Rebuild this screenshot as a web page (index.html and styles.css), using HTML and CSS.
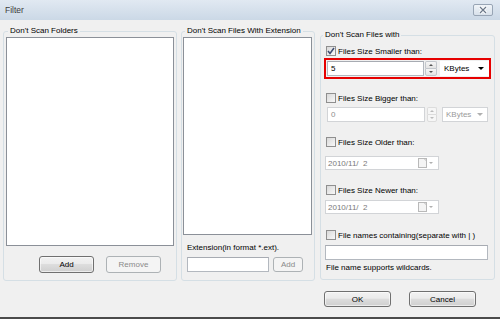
FILE: index.html
```html
<!DOCTYPE html>
<html>
<head>
    <meta charset="UTF-8">
    <title>Filter</title>
    <link rel="stylesheet" href="styles.css">
</head>
<body>
    <div class="window">
        <div class="titlebar">
            <span class="title">Filter</span>
            <span class="close">
                <svg width="10" height="8" viewBox="0 0 10 8"><path d="M2 1 L8 7 M8 1 L2 7" stroke="#fff" stroke-width="3" fill="none"/><path d="M2 1 L8 7 M8 1 L2 7" stroke="#6a7788" stroke-width="1.2" fill="none"/></svg>
            </span>
        </div>

        <div class="content">
            <div class="groups">
                <fieldset class="group folders">
                    <legend>Don't Scan Folders</legend>
                    <div class="list folder-list"></div>
                    <div class="btn-row">
                        <button class="btn">Add</button>
                        <button class="btn disabled">Remove</button>
                    </div>
                </fieldset>

                <fieldset class="group extensions">
                    <legend>Don't Scan Files With Extension</legend>
                    <div class="list ext-list"></div>
                    <div class="ext-label">Extension(in format *.ext).</div>
                    <div class="ext-row">
                        <div class="textbox ext-input"></div>
                        <button class="btn disabled small">Add</button>
                    </div>
                </fieldset>

                <fieldset class="group files">
                    <legend>Don't Scan Files with</legend>

                    <div class="check-row first">
                        <span class="cb checked">
                            <svg width="8" height="8" viewBox="0 0 8 8"><path d="M1 4 L3 6.5 L7 1" stroke="#3b4a70" stroke-width="1.5" fill="none"/></svg>
                        </span>
                        <span>Files Size Smaller than:</span>
                    </div>
                    <div class="size-row highlight">
                        <div class="textbox size-input">5</div>
                        <div class="spin"><span class="up"></span><span class="down"></span></div>
                        <div class="combo">KBytes<span class="arrow"></span></div>
                    </div>

                    <div class="check-row">
                        <span class="cb"></span>
                        <span>Files Size Bigger than:</span>
                    </div>
                    <div class="size-row plain">
                        <div class="textbox size-input off">0</div>
                        <div class="spin off"><span class="up"></span><span class="down"></span></div>
                        <div class="combo off">KBytes<span class="arrow"></span></div>
                    </div>

                    <div class="check-row older">
                        <span class="cb"></span>
                        <span>Files Size Older than:</span>
                    </div>
                    <div class="datebox date-older">
                        <span>2010/11/&nbsp; 2</span>
                        <svg width="16" height="10" viewBox="0 0 16 10"><rect x="0.5" y="0.5" width="8" height="9" fill="#f4f4f4" stroke="#b9b9b9"/><path d="M6 0.5 L8.5 3" stroke="#b9b9b9" fill="none"/><path d="M11 4 L15 4 L13 6 Z" fill="#b0b0b0"/></svg>
                    </div>

                    <div class="check-row newer">
                        <span class="cb"></span>
                        <span>Files Size Newer than:</span>
                    </div>
                    <div class="datebox date-newer">
                        <span>2010/11/&nbsp; 2</span>
                        <svg width="16" height="10" viewBox="0 0 16 10"><rect x="0.5" y="0.5" width="8" height="9" fill="#f4f4f4" stroke="#b9b9b9"/><path d="M6 0.5 L8.5 3" stroke="#b9b9b9" fill="none"/><path d="M11 4 L15 4 L13 6 Z" fill="#b0b0b0"/></svg>
                    </div>

                    <div class="check-row names">
                        <span class="cb"></span>
                        <span>File names containing(separate with | )</span>
                    </div>
                    <div class="textbox names-input"></div>
                    <div class="note">File name supports wildcards.</div>
                </fieldset>
            </div>

            <div class="actions">
                <button class="btn wide">OK</button>
                <button class="btn wide">Cancel</button>
            </div>
        </div>
    </div>
</body>
</html>
```

FILE: styles.css
```css
* {
    box-sizing: border-box;
}

body {
    margin: 0;
    font-family: "Liberation Sans", Arial, sans-serif;
    font-size: 8px;
    color: #000;
}

.window {
    width: 500px;
    height: 319px;
    display: flex;
    flex-direction: column;
    background-color: #f0f0f0;
    border-bottom: 2px solid #4b4b4b;
}

.titlebar {
    height: 20px;
    flex: none;
    display: flex;
    align-items: center;
    justify-content: space-between;
    padding: 0 7px 0 5px;
    background: linear-gradient(#e1e9f2, #cbd8e6);
    color: #3c3c3c;
    font-size: 8.5px;
}

.close {
    width: 20px;
    height: 12px;
    display: flex;
    align-items: center;
    justify-content: center;
    border: 1px solid #98a5b5;
    border-radius: 2px;
    background: linear-gradient(#f0f4f8, #d8e1eb);
}

.content {
    flex: 1;
    padding: 6px 0 0 3px;
}

.groups {
    display: flex;
    align-items: flex-start;
}

.group {
    margin: 0;
    padding: 0;
    border: 1px solid #d5dfe5;
    border-radius: 3px;
    min-width: 0;
}

.group legend {
    padding: 0 2px;
    line-height: 10px;
}

/* left column */
.folders {
    width: 174px;
    padding: 1px 0 7px 0;
}
.folders legend {
    margin-left: 4px;
}

.list {
    background-color: #fff;
    border: 1px solid #8b9098;
}

.folder-list {
    margin-left: 2px;
    width: 168px;
    height: 209px;
}

.btn-row {
    display: flex;
    gap: 12px;
    margin: 10px 0 0 35px;
}

.btn {
    width: 55px;
    height: 17px;
    padding: 0;
    font: inherit;
    color: #000;
    border: 1px solid #707070;
    border-radius: 3px;
    background: linear-gradient(#f2f2f2 0%, #ebebeb 45%, #dddddd 50%, #cfcfcf 100%);
    box-shadow: inset 0 0 0 1px rgba(255, 255, 255, 0.6);
}
.btn.disabled {
    border-color: #adb2b5;
    background: #f4f4f4;
    color: #8a8a8a;
    box-shadow: none;
}
.btn.small {
    width: 30px;
    height: 15px;
}
.btn.wide {
    width: 67px;
    height: 16px;
}

/* middle column */
.extensions {
    width: 134px;
    margin-left: 4px;
    padding: 1px 0 8px 0;
}
.extensions legend {
    margin-left: 3px;
}

.ext-list {
    margin-left: 1px;
    width: 129px;
    height: 198px;
}

.ext-label {
    margin-top: 8px;
    padding-left: 5px;
    line-height: 10px;
}

.ext-row {
    display: flex;
    gap: 4px;
    margin: 4px 0 0 5px;
}

.textbox {
    height: 15px;
    background-color: #fff;
    border: 1px solid #b3b8bf;
    border-top-color: #a7abb2;
    padding-left: 3px;
    line-height: 13px;
}
.textbox.off {
    border-color: #d2d4d7;
    color: #8d8d8d;
}

.ext-input {
    width: 82px;
}

/* right column */
.files {
    width: 175px;
    margin: 4px 0 0 5px;
    padding: 0 0 6px 0;
}
.files legend {
    margin-left: 2px;
}

.check-row {
    height: 12px;
    display: flex;
    align-items: center;
    gap: 2px;
    padding-left: 5px;
    margin-top: 13px;
}
.check-row.first {
    margin-top: 5px;
}
.check-row.older,
.check-row.newer {
    margin-top: 14px;
}
.check-row.names {
    margin-top: 15px;
}

.cb {
    width: 10px;
    height: 10px;
    display: flex;
    align-items: center;
    justify-content: center;
    border: 1px solid #8f8f8f;
    background: linear-gradient(135deg, #d9d9d9, #f8f8f8);
}

.size-row {
    display: flex;
    align-items: center;
}

.highlight {
    width: 167px;
    height: 21px;
    margin: 1px 0 0 3px;
    padding-left: 1px;
    border: 2px solid #e60000;
}
.highlight .size-input {
    width: 97px;
}
.highlight .spin {
    margin-left: 1px;
    width: 12px;
}
.highlight .combo {
    margin-left: 3px;
    width: 49px;
}

.plain {
    margin: 3px 0 0 6px;
}
.plain .size-input {
    width: 98px;
}
.plain .spin {
    margin-left: 2px;
    width: 10px;
}
.plain .combo {
    margin-left: 5px;
    width: 46px;
}

.spin {
    height: 15px;
    display: flex;
    flex-direction: column;
}
.spin span {
    flex: 1;
    display: flex;
    align-items: center;
    justify-content: center;
    border: 1px solid #c3c7cc;
    background: linear-gradient(#f6f6f6, #e4e4e4);
}
.spin .up {
    border-bottom: none;
    border-radius: 2px 2px 0 0;
}
.spin .down {
    border-radius: 0 0 2px 2px;
}
.spin .up::after {
    content: "";
    border-left: 2px solid transparent;
    border-right: 2px solid transparent;
    border-bottom: 2px solid #555;
}
.spin .down::after {
    content: "";
    border-left: 2px solid transparent;
    border-right: 2px solid transparent;
    border-top: 2px solid #555;
}
.spin.off span {
    border-color: #dcdcdc;
    background: #f6f6f6;
}
.spin.off span::after {
    border-top-color: #bbb;
    border-bottom-color: #bbb;
}

.combo {
    height: 15px;
    display: flex;
    align-items: center;
    justify-content: space-between;
    padding: 0 4px 0 3px;
    background-color: #fff;
    border: 1px solid #fff;
}
.combo .arrow {
    border-left: 3px solid transparent;
    border-right: 3px solid transparent;
    border-top: 3px solid #000;
}
.combo.off {
    border-color: #d2d4d7;
    color: #9a9a9a;
}
.combo.off .arrow {
    border-top-color: #b0b0b0;
}

.datebox {
    width: 114px;
    height: 14px;
    margin-left: 4px;
    display: flex;
    align-items: center;
    justify-content: space-between;
    padding: 0 4px 0 2px;
    background-color: #fff;
    border: 1px solid #d2d4d7;
    color: #7a7a7a;
}
.date-older {
    margin-top: 8px;
}
.date-newer {
    margin-top: 4px;
}

.names-input {
    width: 163px;
    margin: 4px 0 0 4px;
}

.note {
    margin-top: 3px;
    padding-left: 5px;
    line-height: 10px;
}

.actions {
    display: flex;
    gap: 18px;
    margin: 10px 0 0 321px;
}
```
